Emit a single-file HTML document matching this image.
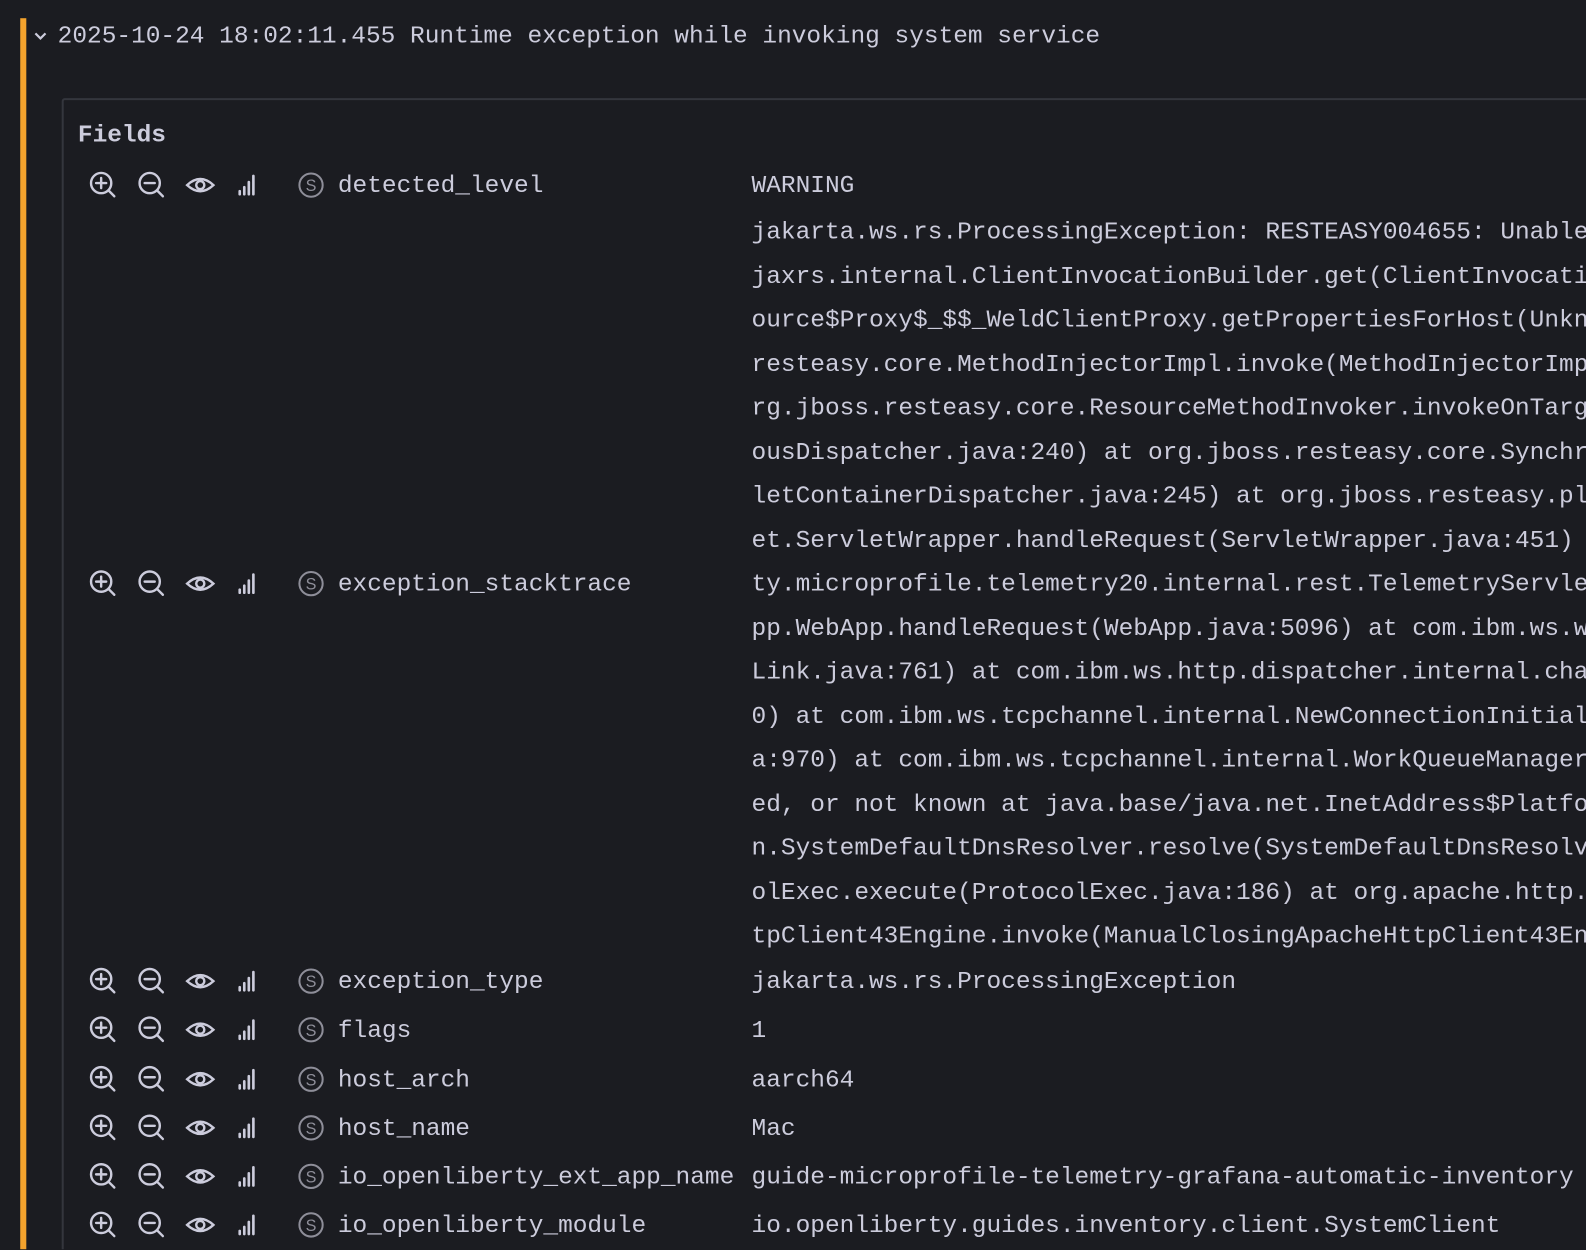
<!DOCTYPE html>
<html><head><meta charset="utf-8"><style>
*{margin:0;padding:0;box-sizing:border-box}
html,body{width:1586px;height:1250px;background:#1b1c21;overflow:hidden}
#w{position:absolute;left:0;top:0;width:1568px;height:1235px;overflow:hidden;transform:scale(1.0115);transform-origin:0 0}
body{font-family:"Liberation Mono",monospace;font-size:24.2px;color:#ccccdc}
.bar{position:absolute;left:20px;top:18px;width:6px;height:1230px;background:#f4a32d}
.t{position:absolute;white-space:nowrap;line-height:30px}
.box{position:absolute;left:61px;top:97px;width:1540px;height:1200px;border:2px solid #34363d;border-radius:3px}
.ic{position:absolute;height:30px}
.vals{position:absolute;left:743px;top:3px;width:825px;height:1230px;overflow:hidden}
.vals div{position:absolute;left:0;white-space:nowrap;line-height:30px}
</style></head><body><div id="w">
<div class="bar"></div>
<svg class="ic" style="left:32px;top:21px" width="16" height="18" viewBox="0 0 16 18"><path d="M3 6 L8 11 L13 6" stroke="#ccccdc" stroke-width="2.2" fill="none"/></svg>
<div class="t" style="left:57px;top:22px">2025-10-24 18:02:11.455 Runtime exception while invoking system service</div>
<div class="box"></div>
<div class="t" style="left:77px;top:120px;font-weight:bold">Fields</div>
<div id="rows"></div>
<div class="vals">
<div style="top:167px">WARNING</div>
<div style="top:213px">jakarta.ws.rs.ProcessingException: RESTEASY004655: Unable to invoke request</div>
<div style="top:257px">jaxrs.internal.ClientInvocationBuilder.get(ClientInvocationBuilder.java</div>
<div style="top:300px">ource$Proxy$_$$_WeldClientProxy.getPropertiesForHost(Unknown Source)</div>
<div style="top:344px">resteasy.core.MethodInjectorImpl.invoke(MethodInjectorImpl.java:154)</div>
<div style="top:387px">rg.jboss.resteasy.core.ResourceMethodInvoker.invokeOnTarget(Resource</div>
<div style="top:431px">ousDispatcher.java:240) at org.jboss.resteasy.core.SynchronousDispatch</div>
<div style="top:474px">letContainerDispatcher.java:245) at org.jboss.resteasy.plugins.server</div>
<div style="top:518px">et.ServletWrapper.handleRequest(ServletWrapper.java:451) at com.ibm</div>
<div style="top:561px">ty.microprofile.telemetry20.internal.rest.TelemetryServletFilter</div>
<div style="top:605px">pp.WebApp.handleRequest(WebApp.java:5096) at com.ibm.ws.webcontainer</div>
<div style="top:648px">Link.java:761) at com.ibm.ws.http.dispatcher.internal.channel.Http</div>
<div style="top:692px">0) at com.ibm.ws.tcpchannel.internal.NewConnectionInitialReadCallback</div>
<div style="top:735px">a:970) at com.ibm.ws.tcpchannel.internal.WorkQueueManager$Worker.run</div>
<div style="top:779px">ed, or not known at java.base/java.net.InetAddress$PlatformNameService</div>
<div style="top:822px">n.SystemDefaultDnsResolver.resolve(SystemDefaultDnsResolver.java:45)</div>
<div style="top:866px">olExec.execute(ProtocolExec.java:186) at org.apache.http.impl.client</div>
<div style="top:909px">tpClient43Engine.invoke(ManualClosingApacheHttpClient43Engine.java</div>
<div style="top:954px">jakarta.ws.rs.ProcessingException</div>
<div style="top:1002px">1</div>
<div style="top:1051px">aarch64</div>
<div style="top:1099px">Mac</div>
<div style="top:1147px">guide-microprofile-telemetry-grafana-automatic-inventory</div>
<div style="top:1195px">io.openliberty.guides.inventory.client.SystemClient</div>
</div>
</div>
<script>
var rows=[[182,"detected_level"],[576,"exception_stacktrace"],[969,"exception_type"],[1017,"flags"],[1066,"host_arch"],[1114,"host_name"],[1162,"io_openliberty_ext_app_name"],[1210,"io_openliberty_module"]];
var c="#ccccdc",h="";
rows.forEach(function(r){var y=r[0];
h+='<svg style="position:absolute;left:87px;top:'+(y-15)+'px" width="190" height="32" viewBox="0 0 190 32">'+
'<g stroke="'+c+'" stroke-width="2.4" fill="none" stroke-linecap="round">'+
'<circle cx="13" cy="14" r="10"/><path d="M20.5 21.5 L26 27 M13 9 V19 M8 14 H18"/>'+
'<circle cx="61" cy="14" r="10"/><path d="M68.5 21.5 L74 27 M56 14 H66"/>'+
'<path d="M98 16 Q111 4 124 16 Q111 28 98 16Z"/><circle cx="111" cy="16" r="4"/>'+
'<path d="M150 22 V25 M154.5 18 V25 M159 13 V25 M163.5 7 V25" stroke-width="2.6"/>'+
'</g></svg>';
h+='<svg style="position:absolute;left:294px;top:'+(y-13)+'px" width="28" height="28" viewBox="0 0 28 28"><circle cx="13.5" cy="14" r="11.5" stroke="#8e8e99" stroke-width="2" fill="none"/><text x="13.5" y="20" text-anchor="middle" font-family="Liberation Sans,sans-serif" font-size="16" fill="#8e8e99">S</text></svg>';
h+='<div class="t" style="left:334px;top:'+(y-12)+'px">'+r[1]+'</div>';
});
document.getElementById("rows").innerHTML=h;
</script>
</body></html>
